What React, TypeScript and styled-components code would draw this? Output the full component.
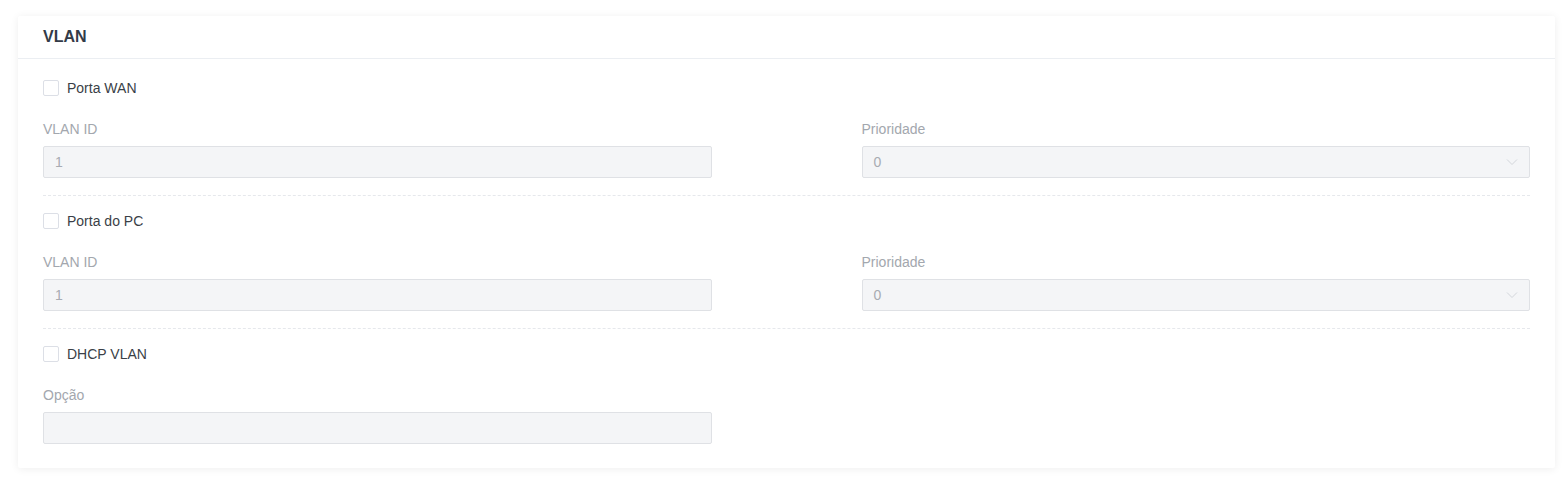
import React from "react";
import styled, { createGlobalStyle } from "styled-components";

const GlobalStyle = createGlobalStyle`
  html, body { margin: 0; padding: 0; background: #ffffff; }
  body { font-family: "Liberation Sans", Arial, sans-serif; }
  * { box-sizing: border-box; }
`;

const Page = styled.div`
  width: 1566px;
  height: 489px;
  padding: 0 11px 0 18px;
  overflow: hidden;
`;

const PrevCard = styled.div`
  height: 0;
  box-shadow: 0 1px 10px rgba(0, 0, 0, 0.08);
`;

const Card = styled.section`
  margin-top: 16px;
  background: #fff;
  box-shadow: 0 1px 8px rgba(0, 0, 0, 0.07);
  border-radius: 2px;
`;

const Header = styled.div`
  height: 43px;
  padding: 0 25px;
  display: flex;
  align-items: center;
  border-bottom: 1px solid #ebeef2;
  font-size: 16px;
  font-weight: 700;
  color: #333b48;
`;

const Body = styled.div`
  padding: 20px 25px 24px;
  display: flex;
  flex-direction: column;
`;

const CheckRow = styled.label`
  display: flex;
  align-items: center;
  height: 18px;
  gap: 8px;
  font-size: 14px;
  color: #3a3f47;
`;

const Box = styled.span`
  width: 16px;
  height: 16px;
  border: 1px solid #dcdfe6;
  border-radius: 2px;
  background: #fff;
`;

const Row = styled.div`
  display: grid;
  grid-template-columns: 1fr 1fr;
  column-gap: 150px;
  margin-top: 22px;
`;

const Field = styled.div`
  display: flex;
  flex-direction: column;
`;

const FieldLabel = styled.div`
  height: 20px;
  line-height: 20px;
  font-size: 14px;
  color: #a3a7ae;
  margin-bottom: 7px;
`;

const Input = styled.div`
  position: relative;
  height: 32px;
  display: flex;
  align-items: center;
  padding: 0 11px;
  background: #f4f5f7;
  border: 1px solid #dfe1e5;
  border-radius: 2px;
  font-size: 14px;
  color: #a8abb2;
`;

const Chevron = styled.svg`
  position: absolute;
  right: 11px;
  top: 50%;
  margin-top: -4px;
`;

const Divider = styled.div`
  margin: 17px 0 16px;
  border-top: 1px dashed #e6e8ec;
`;

const ChevronIcon = () => (
  <Chevron width="12" height="8" viewBox="0 0 12 8">
    <path d="M1 1.5 L6 6.5 L11 1.5" fill="none" stroke="#d3d6db" strokeWidth="1" />
  </Chevron>
);

type Section = { check: string; fields: { label: string; value: string; select?: boolean }[] };

const sections: Section[] = [
  {
    check: "Porta WAN",
    fields: [
      { label: "VLAN ID", value: "1" },
      { label: "Prioridade", value: "0", select: true },
    ],
  },
  {
    check: "Porta do PC",
    fields: [
      { label: "VLAN ID", value: "1" },
      { label: "Prioridade", value: "0", select: true },
    ],
  },
  {
    check: "DHCP VLAN",
    fields: [{ label: "Opção", value: "" }],
  },
];

export default function App() {
  return (
    <>
      <GlobalStyle />
      <Page>
        <PrevCard />
        <Card>
          <Header>VLAN</Header>
          <Body>
            {sections.map((s, i) => (
              <React.Fragment key={s.check}>
                {i > 0 && <Divider />}
                <CheckRow>
                  <Box />
                  {s.check}
                </CheckRow>
                <Row>
                  {s.fields.map((f) => (
                    <Field key={f.label}>
                      <FieldLabel>{f.label}</FieldLabel>
                      <Input>
                        {f.value}
                        {f.select && <ChevronIcon />}
                      </Input>
                    </Field>
                  ))}
                </Row>
              </React.Fragment>
            ))}
          </Body>
        </Card>
      </Page>
    </>
  );
}
